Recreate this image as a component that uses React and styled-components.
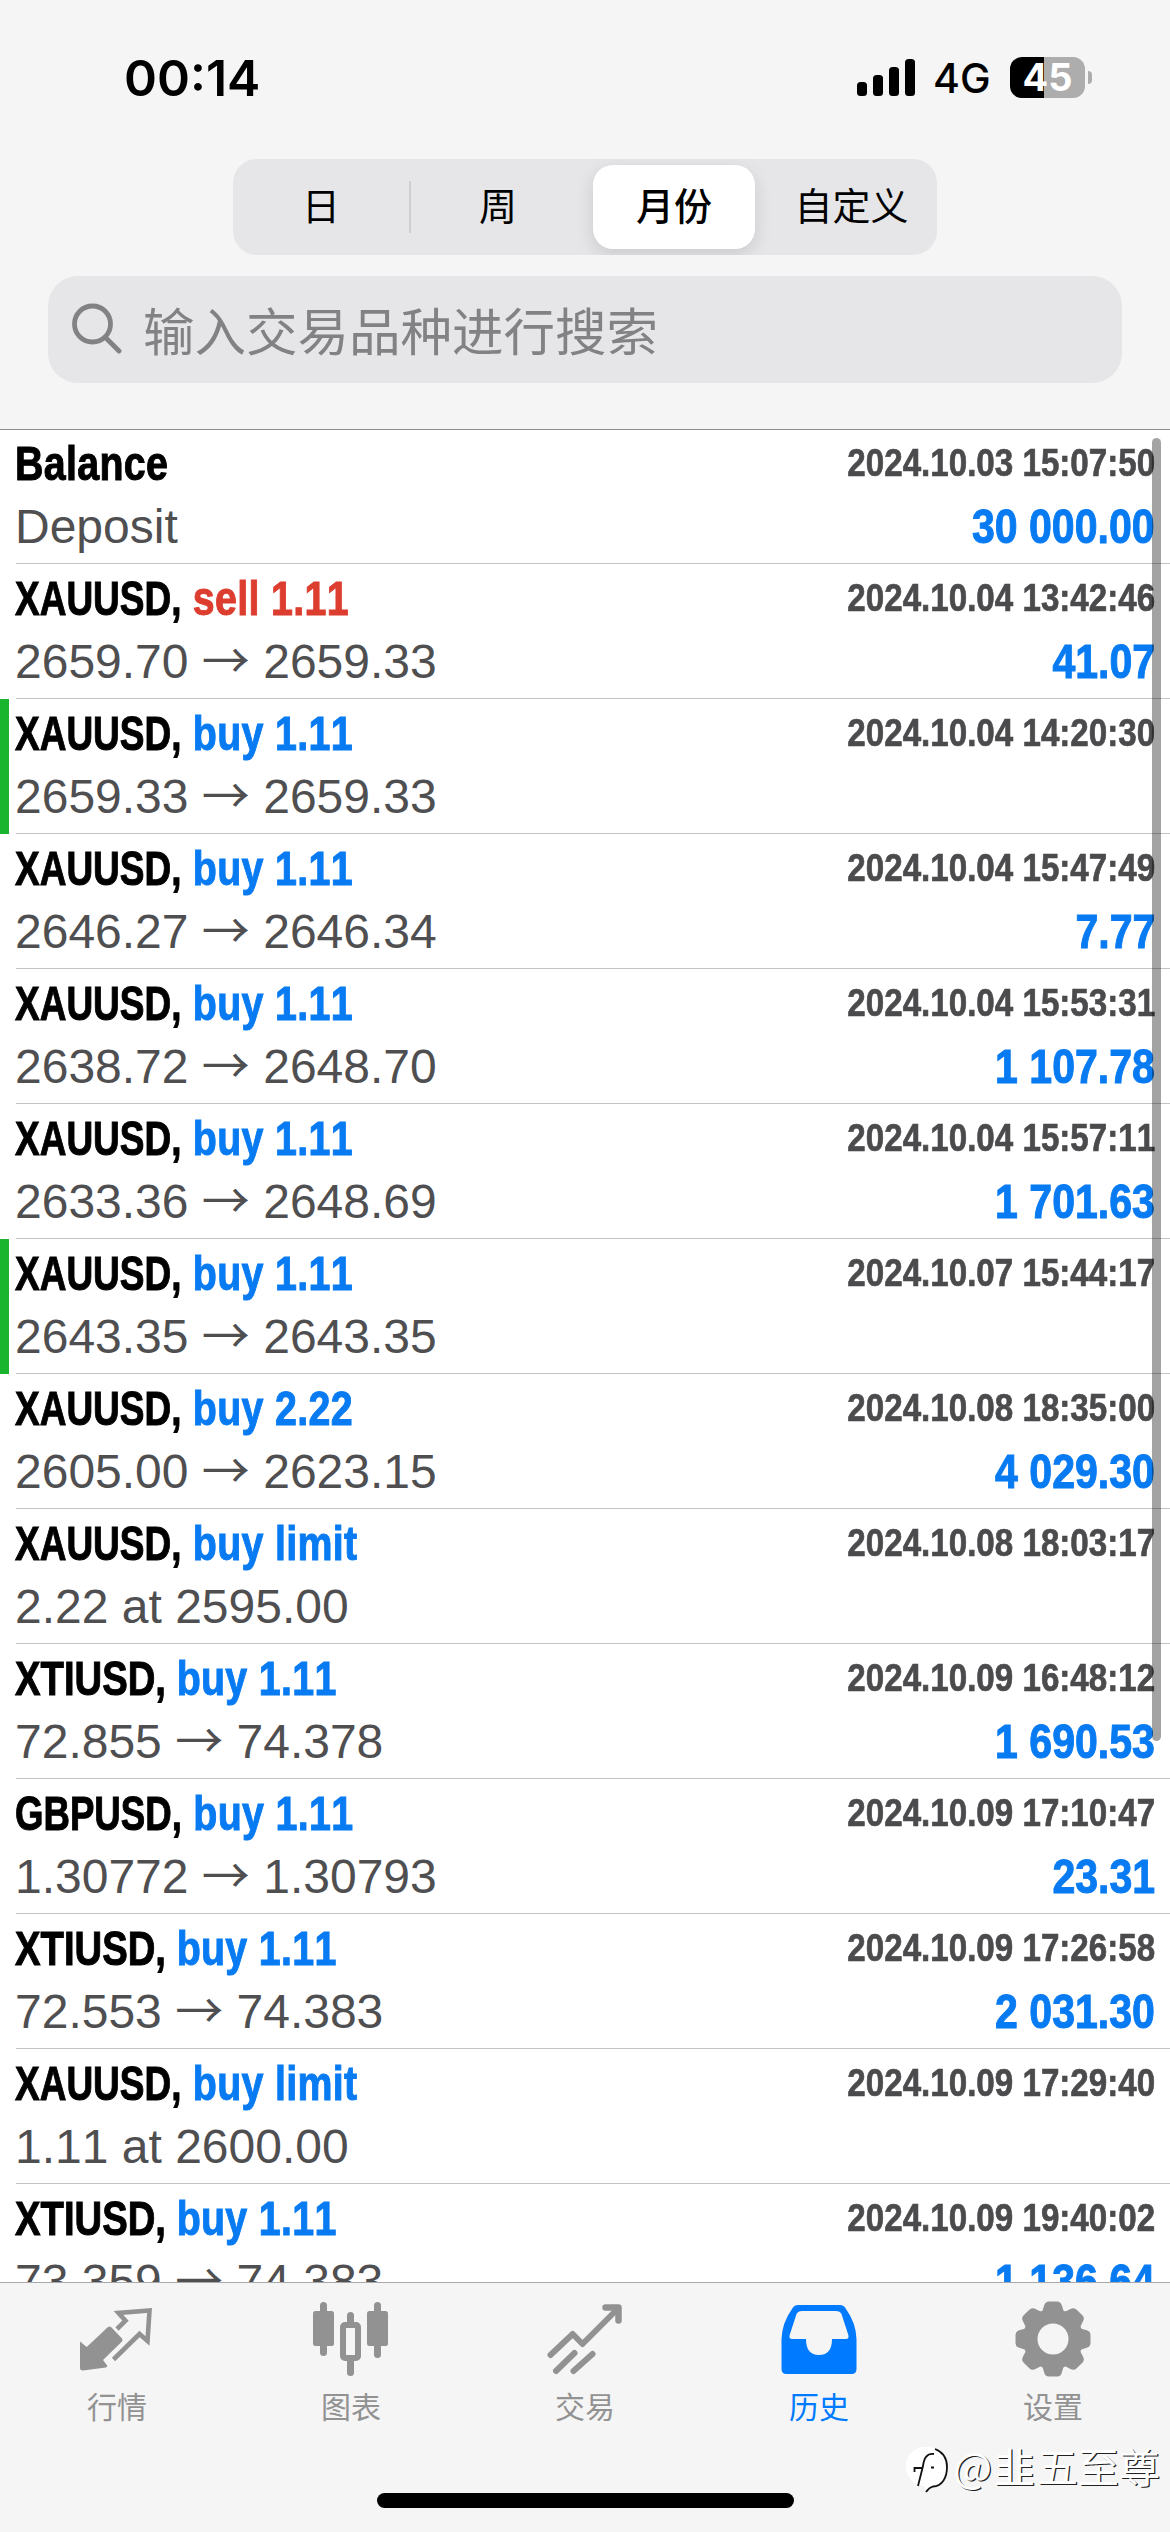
import React from 'react';
import styled, { createGlobalStyle } from 'styled-components';

const GlobalStyle = createGlobalStyle`
  * { box-sizing: border-box; }

  body {
    margin: 0;
    background: #f5f5f5;
  }
`;

const deals = [
  { symbol: 'Balance', time: '2024.10.03 15:07:50', detail: 'Deposit', profit: '30 000.00' },
  { symbol: 'XAUUSD', side: 'sell', volume: '1.11', time: '2024.10.04 13:42:46', from: '2659.70', to: '2659.33', profit: '41.07' },
  { symbol: 'XAUUSD', side: 'buy', volume: '1.11', time: '2024.10.04 14:20:30', from: '2659.33', to: '2659.33', marked: true },
  { symbol: 'XAUUSD', side: 'buy', volume: '1.11', time: '2024.10.04 15:47:49', from: '2646.27', to: '2646.34', profit: '7.77' },
  { symbol: 'XAUUSD', side: 'buy', volume: '1.11', time: '2024.10.04 15:53:31', from: '2638.72', to: '2648.70', profit: '1 107.78' },
  { symbol: 'XAUUSD', side: 'buy', volume: '1.11', time: '2024.10.04 15:57:11', from: '2633.36', to: '2648.69', profit: '1 701.63' },
  { symbol: 'XAUUSD', side: 'buy', volume: '1.11', time: '2024.10.07 15:44:17', from: '2643.35', to: '2643.35', marked: true },
  { symbol: 'XAUUSD', side: 'buy', volume: '2.22', time: '2024.10.08 18:35:00', from: '2605.00', to: '2623.15', profit: '4 029.30' },
  { symbol: 'XAUUSD', side: 'buy', volume: 'limit', time: '2024.10.08 18:03:17', detail: '2.22 at 2595.00' },
  { symbol: 'XTIUSD', side: 'buy', volume: '1.11', time: '2024.10.09 16:48:12', from: '72.855', to: '74.378', profit: '1 690.53' },
  { symbol: 'GBPUSD', side: 'buy', volume: '1.11', time: '2024.10.09 17:10:47', from: '1.30772', to: '1.30793', profit: '23.31' },
  { symbol: 'XTIUSD', side: 'buy', volume: '1.11', time: '2024.10.09 17:26:58', from: '72.553', to: '74.383', profit: '2 031.30' },
  { symbol: 'XAUUSD', side: 'buy', volume: 'limit', time: '2024.10.09 17:29:40', detail: '1.11 at 2600.00' },
  { symbol: 'XTIUSD', side: 'buy', volume: '1.11', time: '2024.10.09 19:40:02', from: '73.359', to: '74.383', profit: '1 136.64' },
];

// capitals run wide, so each ticker is tightened by a few pixels
const tickerTrim = { XAUUSD: 13, XTIUSD: 6, GBPUSD: 15 };

const QuotesIcon = () => (
  <svg width="76" height="76" viewBox="0 0 76 76" fill="currentColor">
    <path d="M1 40.500 L7.700 46 L29 26 Q30.500 25 32 26 L43 37.500 Q44 39 43 40.500 L24 59 L28.500 65 L27 66.500 L4 69.500 Q1 69.500 1 67 Z" />
    <path d="M38 28 L46.500 19.700 L39.500 12 L70.500 9.500 L68.500 40 L60.500 33 L34.500 58.500" fill="none" stroke="currentColor" strokeWidth="4.6" />
  </svg>
);

const ChartIcon = () => (
  <svg width="76" height="76" viewBox="0 0 76 76" fill="currentColor">
    <rect x="0" y="10" width="21" height="35" rx="2.5" />
    <rect x="7" y="1" width="7" height="54" rx="3.5" />
    <rect x="54" y="10" width="21" height="35" rx="2.5" />
    <rect x="61" y="1" width="7" height="56" rx="3.5" />
    <rect x="34" y="11" width="7" height="16" rx="3.5" />
    <rect x="34" y="56" width="7" height="19" rx="3.5" />
    <rect x="30" y="24" width="15" height="33" rx="2" fill="none" stroke="currentColor" strokeWidth="6" />
  </svg>
);

const TradeIcon = () => (
  <svg width="76" height="76" viewBox="0 0 76 76" fill="none" stroke="currentColor" strokeWidth="6" strokeLinecap="round" strokeLinejoin="round">
    <path d="M3.500 54 L25.700 33 L35.500 43 L71 7.500" />
    <path d="M58.500 6.500 H71.500 V19.500" strokeWidth="6.5" />
    <path d="M9 70 L27.500 52 M26.500 70 L45.500 53" />
  </svg>
);

const HistoryIcon = () => (
  <svg width="76" height="76" viewBox="0 0 76 76" fill="currentColor" fillRule="evenodd">
    <path d="M17 4 H59 Q63 4 65 8 Q75 22 75.500 38 V68 Q75.500 73 70.500 73 H5.500 Q.5 73 .5 68 V38 Q1 22 11 8 Q13 4 17 4 Z M21 10 Q17 10 15.500 13 L9 33 Q7 38 11.500 38 H25 Q25 54 38 54 Q51 54 51 38 H64.500 Q69 38 67 33 L60.500 13 Q59 10 55 10 Z" />
  </svg>
);

const SettingsIcon = () => (
  <svg width="76" height="76" viewBox="-38 -38 76 76" fill="currentColor">
    <mask id="gearHole">
      <rect x="-38" y="-38" width="76" height="76" fill="#fff" />
      <circle r="15.500" fill="#000" />
    </mask>
    <g mask="url(#gearHole)">
      <circle r="30" />
      {[0, 45, 90, 135, 180, 225, 270, 315].map((angle) => (
        <path key={angle} transform={`rotate(${angle})`} d="M-13 -25 Q-10 -28 -9 -33 Q-8 -37.500 -4 -37.500 H4 Q8 -37.500 9 -33 Q10 -28 13 -25 Z" />
      ))}
    </g>
  </svg>
);

const tabs = [
  { label: '行情', Icon: QuotesIcon },
  { label: '图表', Icon: ChartIcon },
  { label: '交易', Icon: TradeIcon },
  { label: '历史', Icon: HistoryIcon, active: true },
  { label: '设置', Icon: SettingsIcon },
];

const App = () => {
  return (
    <Screen>
      <GlobalStyle />
      <Header>
        <StatusBar>
          <Clock>00:14</Clock>
          <StatusIcons>
            <Signal>
              <SignalBar $height={14} />
              <SignalBar $height={21} />
              <SignalBar $height={29} />
              <SignalBar $height={37} />
            </Signal>
            <Network>4G</Network>
            <Battery>45</Battery>
            <BatteryTip />
          </StatusIcons>
        </StatusBar>
        <Segments>
          <Segment>日</Segment>
          <Segment $divided>周</Segment>
          <Segment $active>月份</Segment>
          <Segment $indent={5}>自定义</Segment>
        </Segments>
        <SearchField>
          <svg width="50" height="52" viewBox="0 0 50 52" fill="none" stroke="#828285" strokeWidth="4.8" strokeLinecap="round">
            <circle cx="20.500" cy="22" r="18" />
            <path d="M33.500 35.500 L47 49" />
          </svg>
          <span>输入交易品种进行搜索</span>
        </SearchField>
      </Header>

      <DealList>
        {deals.map((deal) => (
          <Deal key={deal.time} $marked={deal.marked}>
            <DealLine>
              <Title>
                {deal.side ? <Ticker $trim={tickerTrim[deal.symbol]}>{deal.symbol},</Ticker> : deal.symbol}
                {deal.side && <Side $side={deal.side}> {deal.side} {deal.volume}</Side>}
              </Title>
              <Time>{deal.time}</Time>
            </DealLine>
            <DealLine>
              <Prices>
                {deal.detail || <>{deal.from} <Arrow>→</Arrow> {deal.to}</>}
              </Prices>
              <Profit>{deal.profit}</Profit>
            </DealLine>
          </Deal>
        ))}
        <ScrollThumb />
      </DealList>

      <TabBar>
        {tabs.map(({ label, Icon, active }) => (
          <Tab key={label} $active={active}>
            <Icon />
            <span>{label}</span>
          </Tab>
        ))}
      </TabBar>

      <Watermark>
        <svg width="46" height="52" viewBox="0 0 46 52">
          <path d="M20 4 C33 4 41 12 41 24 C41 35 35 43 26 44 L20 49 L19 43 C7 42 0 35 0 23 C0 12 8 4 20 4 Z" fill="#fff" />
          <path d="M29 6 C37 9 41 15 41 24 C41 35 36 43 27 43.500 Q23 44.500 20 49" fill="none" stroke="#111" strokeWidth="1.8" />
          <path d="M28 11 C21 10 18 15 17 23 L12 43 M8.500 29 V25 H17 M25 24.500 H28" fill="none" stroke="#111" strokeWidth="1.8" />
        </svg>
        <span>@韭五至尊</span>
      </Watermark>
      <HomeIndicator />
    </Screen>
  );
};

const Screen = styled.div`
  position: relative;
  display: flex;
  flex-direction: column;
  width: 1170px;
  height: 2532px;
  overflow: hidden;
  background: #f5f5f5;
  font-family: "Liberation Sans", "Noto Sans CJK SC", sans-serif;
  font-kerning: none;
`;

const Header = styled.header`
  position: relative;
  z-index: 1;
  flex: none;
  height: 430px;
  border-bottom: 1px solid #8f8f92;
`;

const StatusBar = styled.div`
  display: flex;
  justify-content: space-between;
  height: 159px;
  padding: 57px 78px 0 124px;
  font-family: Inter, sans-serif;
  font-kerning: normal;
`;

const Clock = styled.div`
  height: 42px;
  line-height: 43px;
  font-size: 50px;
  font-weight: 600;
`;

const StatusIcons = styled.div`
  display: flex;
  align-items: center;
  height: 41px;
`;

const Signal = styled.div`
  display: flex;
  align-items: flex-end;
  gap: 6px;
  height: 37px;
  margin-right: 18px;
`;

const SignalBar = styled.div`
  width: 10px;
  height: ${(props) => props.$height}px;
  border-radius: 3.5px;
  background: #000;
`;

const Network = styled.div`
  width: 77px;
  font-size: 41px;
  font-weight: 500;
`;

const Battery = styled.div`
  width: 75px;
  height: 41px;
  border-radius: 12px;
  background: linear-gradient(to right, #000 34px, #adadad 34px);
  color: #fff;
  font-size: 38px;
  font-weight: 700;
  line-height: 41px;
  text-align: center;
`;

const BatteryTip = styled.div`
  width: 4px;
  height: 13px;
  margin-left: 3px;
  border-radius: 0 5px 5px 0;
  background: #adadad;
`;

const Segments = styled.div`
  display: grid;
  grid-template-columns: repeat(4, 176px);
  grid-template-rows: 96px;
  width: 704px;
  height: 96px;
  margin: 0 auto;
  overflow: hidden;
  border-radius: 24px;
  background: #e6e6e8;
`;

const Segment = styled.div`
  display: flex;
  align-items: center;
  justify-content: center;
  margin: ${(props) => (props.$active ? '6px 6px 6px 8px' : props.$divided ? '22px 0' : '0')};
  padding: 0 0 7px ${(props) => props.$indent || 0}px;
  border-left: ${(props) => (props.$divided ? '2px solid #cfcfd2' : 'none')};
  border-radius: ${(props) => (props.$active ? '20px' : '0')};
  background: ${(props) => (props.$active ? '#fff' : 'none')};
  box-shadow: ${(props) => (props.$active ? '0 6px 18px rgba(0, 0, 0, 0.12)' : 'none')};
  font-family: "Noto Sans CJK SC", sans-serif;
  font-size: 38px;
  font-weight: ${(props) => (props.$active ? 500 : 400)};
  line-height: 1;
`;

const SearchField = styled.div`
  display: flex;
  align-items: center;
  gap: 21px;
  height: 107px;
  margin: 21px 48px 0;
  padding: 0 24px 3px;
  border-radius: 30px;
  background: #e6e6e8;
  color: #828285;
  font-family: "Noto Sans CJK SC", sans-serif;
  font-size: 51.5px;
`;

const DealList = styled.main`
  position: relative;
  flex: none;
  height: 1853px;
  margin-top: -1px;
  overflow: hidden;
  background: #fff;
`;

const Deal = styled.div`
  height: 135px;
  padding: 3px 15px 0 6px;
  border-left: 9px solid ${(props) => (props.$marked ? '#19b52e' : 'transparent')};
  background: linear-gradient(#c4c4c6, #c4c4c6) 7px 100% / 100% 1px no-repeat;
`;

const DealLine = styled.div`
  display: flex;
  align-items: flex-start;
  justify-content: space-between;
  height: 63px;
  line-height: 63px;
  white-space: nowrap;
`;

/* squeezed by the parts below to condensed proportions */
const Condensed = styled.div`
  font-weight: 700;
  -webkit-text-stroke: 1px currentColor;
`;

const Title = styled(Condensed)`
  color: #000;
  font-size: 48px;
  letter-spacing: 0.4px;
  transform: scaleX(0.82);
  transform-origin: left;
`;

const Ticker = styled.span`
  display: inline-block;
  margin-right: -${(props) => props.$trim}px;
  letter-spacing: 0;
  transform: scaleX(${(props) => 1 - props.$trim / 216});
  transform-origin: left;
`;

const Side = styled.span`
  color: ${(props) => (props.$side === 'sell' ? '#dd3d2f' : '#087bf2')};
`;

const Time = styled(Condensed)`
  color: #4b4b4d;
  font-size: 39px;
  line-height: 61px;
  -webkit-text-stroke-width: 0.7px;
  transform: scaleX(0.85);
  transform-origin: right;
`;

const Prices = styled.div`
  color: #4f4f51;
  font-size: 48px;
`;

const Arrow = styled.span`
  display: inline-block;
  width: 48px;
  font-family: "Noto Sans CJK SC", sans-serif;
  font-weight: 400;
  line-height: 1;
  text-align: center;
`;

const Profit = styled(Condensed)`
  color: #087bf2;
  font-size: 48px;
  transform: scaleX(0.855);
  transform-origin: right;
`;

const ScrollThumb = styled.div`
  position: absolute;
  top: 9px;
  right: 9px;
  width: 9px;
  height: 1303px;
  border-radius: 5px;
  background: rgba(0, 0, 0, 0.36);
`;

const TabBar = styled.nav`
  display: grid;
  grid-template-columns: repeat(5, 1fr);
  flex: none;
  height: 250px;
  border-top: 1px solid #a9a9ab;
`;

const Tab = styled.div`
  display: flex;
  flex-direction: column;
  align-items: center;
  padding-top: 18px;
  color: ${(props) => (props.$active ? '#007aff' : '#929292')};
  font-family: "Noto Sans CJK SC", sans-serif;
  font-size: 30px;
  line-height: 40px;

  svg { margin-bottom: 8px; }
`;

const Watermark = styled.div`
  position: absolute;
  right: 10px;
  bottom: 37px;
  display: flex;
  align-items: center;
  gap: 1px;
  color: #fff;
  font-family: "Noto Sans CJK SC", sans-serif;
  font-size: 41px;
  line-height: 60px;
  text-shadow: 1.2px 1.2px 0 #222;

  span { margin-top: -7px; }

  span::first-letter { letter-spacing: 2px; }
`;

const HomeIndicator = styled.div`
  position: absolute;
  bottom: 24px;
  left: 377px;
  width: 417px;
  height: 15px;
  border-radius: 8px;
  background: #000;
`;

export default App;
